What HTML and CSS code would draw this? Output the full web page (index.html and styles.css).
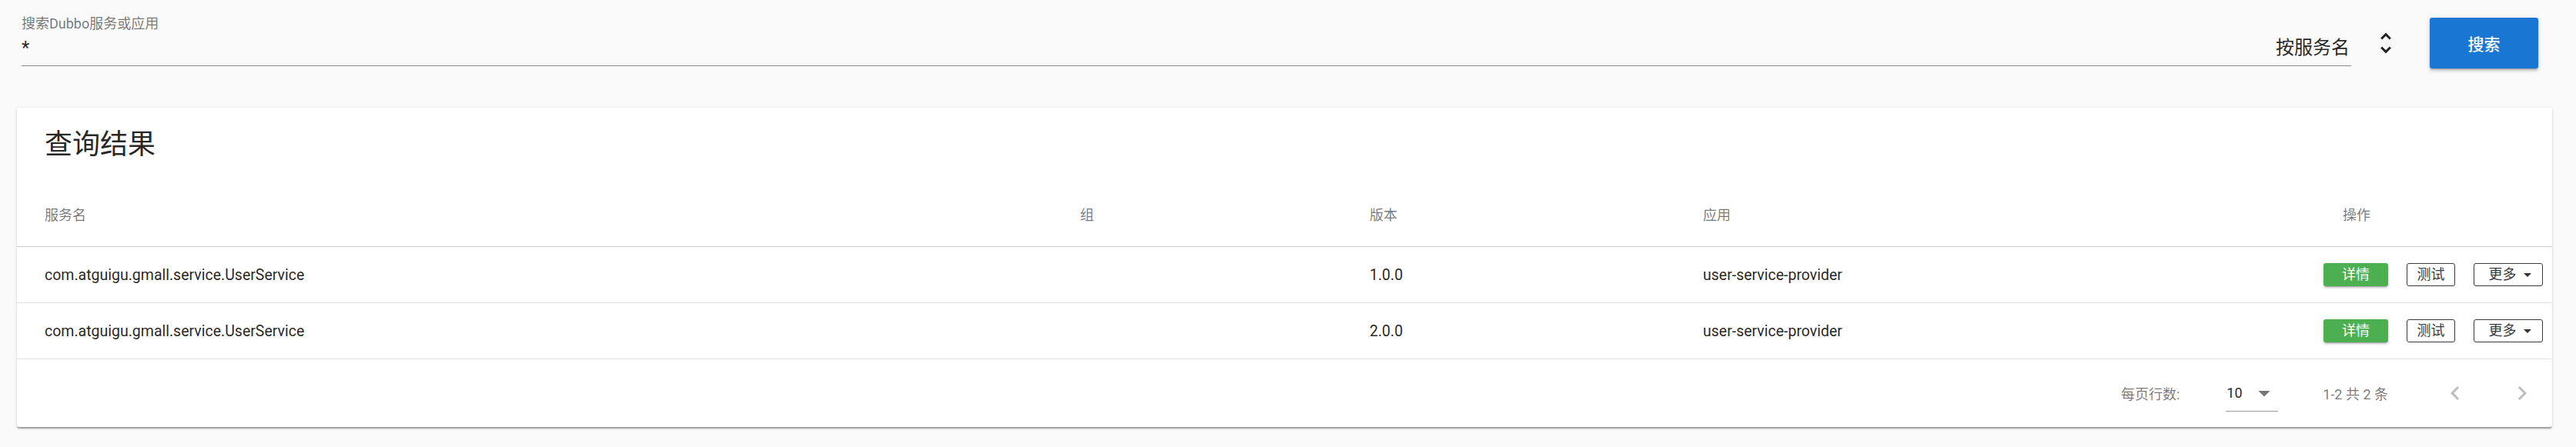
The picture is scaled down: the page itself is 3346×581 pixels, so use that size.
FILE: index.html
```html
<!DOCTYPE html>
<html lang="zh-CN">
<head>
<meta charset="utf-8">
<title>Dubbo Admin</title>
<link rel="stylesheet" href="styles.css">
</head>
<body>
<div class="page">
  <div class="search-bar">
    <div class="field">
      <label class="field-label">搜索Dubbo服务或应用</label>
      <div class="field-input">
        <span class="input-value">*</span>
        <span class="select-value">按服务名</span>
      </div>
    </div>
    <span class="unfold-icon">
      <svg viewBox="0 0 24 24" width="36" height="36"><path d="M12 5.83L15.17 9l1.41-1.41L12 3 7.41 7.59 8.83 9 12 5.83zm0 12.34L8.83 15l-1.41 1.41L12 21l4.59-4.59L15.17 15 12 18.17z" fill="#222"/></svg>
    </span>
    <button class="btn-search">搜索</button>
  </div>

  <div class="card">
    <div class="card-title">查询结果</div>
    <div class="table">
      <div class="row head">
        <div class="cell">服务名</div>
        <div class="cell">组</div>
        <div class="cell">版本</div>
        <div class="cell">应用</div>
        <div class="cell center">操作</div>
      </div>
      <div class="row">
        <div class="cell">com.atguigu.gmall.service.UserService</div>
        <div class="cell"></div>
        <div class="cell">1.0.0</div>
        <div class="cell">user-service-provider</div>
        <div class="cell actions">
          <button class="btn-detail">详情</button>
          <button class="btn-outline btn-test">测试</button>
          <button class="btn-outline btn-more">更多<span class="caret"></span></button>
        </div>
      </div>
      <div class="row">
        <div class="cell">com.atguigu.gmall.service.UserService</div>
        <div class="cell"></div>
        <div class="cell">2.0.0</div>
        <div class="cell">user-service-provider</div>
        <div class="cell actions">
          <button class="btn-detail">详情</button>
          <button class="btn-outline btn-test">测试</button>
          <button class="btn-outline btn-more">更多<span class="caret"></span></button>
        </div>
      </div>
    </div>
    <div class="footer">
      <span class="footer-label">每页行数:</span>
      <div class="rows-select">
        <span class="rows-value">10</span>
        <svg class="drop" viewBox="0 0 24 24" width="36" height="36"><path d="M7 10l5 5 5-5z" fill="#757575"/></svg>
      </div>
      <span class="page-text">1-2 共 2 条</span>
      <span class="page-btn prev"><svg viewBox="0 0 24 24" width="36" height="36"><path d="M15.41 7.41L14 6l-6 6 6 6 1.41-1.41L10.83 12z" fill="#bdbdbd"/></svg></span>
      <span class="page-btn next"><svg viewBox="0 0 24 24" width="36" height="36"><path d="M10 6L8.59 7.41 13.17 12l-4.58 4.59L10 18l6-6z" fill="#bdbdbd"/></svg></span>
    </div>
  </div>
</div>
</body>
</html>
```

FILE: styles.css
```css
* { box-sizing: border-box; }
html, body {
  margin: 0;
  padding: 0;
  background: #fafafa;
}
body {
  font-family: Roboto, "Noto Sans CJK SC", sans-serif;
  color: rgba(0, 0, 0, 0.87);
}
.page {
  width: 3346px;
  height: 581px;
  background: #fafafa;
}

/* search bar */
.search-bar {
  display: flex;
  align-items: flex-start;
  height: 140px;
  padding: 0 49px 0 28px;
}
.field {
  flex: 1;
  padding-top: 20px;
}
.field-label {
  display: block;
  font-size: 18px;
  line-height: 22px;
  color: rgba(0, 0, 0, 0.54);
}
.field-input {
  display: flex;
  justify-content: space-between;
  align-items: baseline;
  padding: 2px 0 5px;
  border-bottom: 1px solid #8c8c8c;
  font-size: 24px;
  line-height: 36px;
}
.input-value { color: rgba(0, 0, 0, 0.87); }
.select-value { color: rgba(0, 0, 0, 0.87); padding-right: 2px; }
.unfold-icon {
  display: block;
  width: 36px;
  height: 36px;
  margin: 38px 0 0 27px;
}
.unfold-icon svg { display: block; }
.btn-search {
  margin: 23px 0 0 39px;
  width: 141px;
  height: 66px;
  border: none;
  border-radius: 3px;
  background: #1976d2;
  color: #fff;
  font-family: Roboto, "Noto Sans CJK SC", sans-serif;
  font-size: 21px;
  font-weight: 500;
  box-shadow: 0 3px 1.5px -2px rgba(0,0,0,.2), 0 3px 3px 0 rgba(0,0,0,.14), 0 1.5px 7.5px 0 rgba(0,0,0,.12);
}

/* card */
.card {
  margin: 0 31px 0 22px;
  background: #fff;
  border-radius: 3px;
  box-shadow: 0 3px 1.5px -1.5px rgba(0,0,0,.2), 0 1.5px 1.5px 0 rgba(0,0,0,.14), 0 1.5px 4.5px 0 rgba(0,0,0,.12);
}
.card-title {
  padding: 24px 36px;
  font-size: 36px;
  line-height: 48px;
  color: rgba(0, 0, 0, 0.87);
}
.row {
  display: grid;
  grid-template-columns: 1345px 376px 433px 631px 1fr;
  align-items: center;
  height: 73px;
  border-bottom: 1px solid #e3e3e3;
  font-size: 19.5px;
  color: rgba(0, 0, 0, 0.87);
}
.row.head {
  height: 85px;
  border-bottom: 1px solid #cccccc;
  font-size: 18px;
  color: rgba(0, 0, 0, 0.54);
}
.cell {
  padding: 0 36px;
  white-space: nowrap;
}
.cell.center { text-align: center; }
.cell.actions {
  display: flex;
  justify-content: flex-end;
  gap: 24px;
  padding: 0 12px 0 0;
}
.actions button {
  height: 30px;
  padding: 0;
  border-radius: 3px;
  font-family: Roboto, "Noto Sans CJK SC", sans-serif;
  font-size: 18px;
  line-height: 28px;
  display: flex;
  align-items: center;
  justify-content: center;
}
.btn-detail {
  width: 84px;
  border: none;
  background: #4caf50;
  color: #fff;
  box-shadow: 0 3px 1.5px -2px rgba(0,0,0,.2), 0 2px 3px 0 rgba(0,0,0,.14), 0 1px 4px 0 rgba(0,0,0,.12);
}
.btn-outline {
  border: 1px solid #3a3a3a;
  background: #fff;
  color: #3a3a3a;
}
.btn-test { width: 63px; }
.btn-more { width: 90px; padding-left: 4px !important; }
.caret {
  display: inline-block;
  width: 0;
  height: 0;
  margin-left: 9px;
  border-left: 5px solid transparent;
  border-right: 5px solid transparent;
  border-top: 5px solid #333;
}

/* footer */
.footer {
  display: flex;
  justify-content: flex-end;
  align-items: center;
  height: 88px;
  padding-right: 21px;
  font-size: 18px;
  color: rgba(0, 0, 0, 0.54);
}
.rows-select {
  display: flex;
  align-items: center;
  height: 48px;
  width: 68px;
  margin-left: 60px;
  border-bottom: 1px solid #9e9e9e;
  margin-top: 0;
}
.rows-value {
  flex: 1;
  padding-left: 1px;
  color: rgba(0, 0, 0, 0.87);
}
.drop { display: block; }
.page-text { margin-left: 58px; }
.page-btn {
  display: block;
  width: 36px;
  height: 36px;
}
.page-btn svg { display: block; }
.page-btn.prev { margin-left: 69px; }
.page-btn.next { margin-left: 51px; }
```
